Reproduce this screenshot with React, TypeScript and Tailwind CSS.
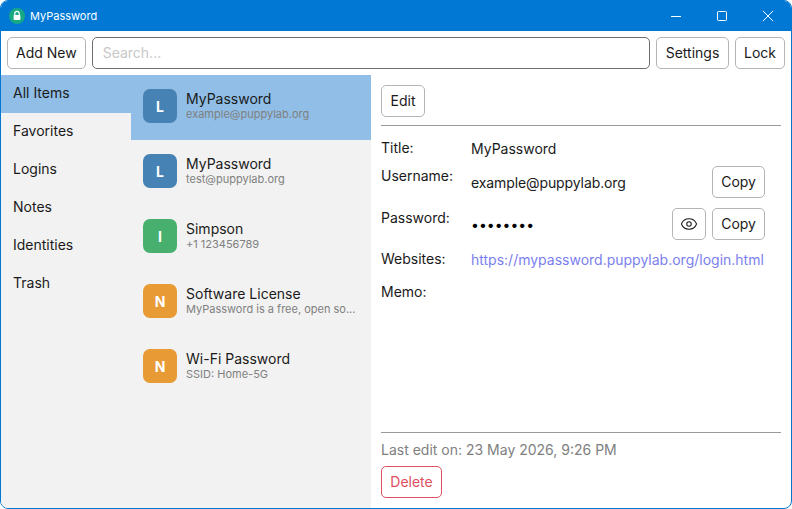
import { Eye } from "lucide-react";

const folders = ["All Items", "Favorites", "Logins", "Notes", "Identities", "Trash"];

const items = [
  { letter: "L", color: "bg-[#4682b4]", title: "MyPassword", sub: "example@puppylab.org" },
  { letter: "L", color: "bg-[#4682b4]", title: "MyPassword", sub: "test@puppylab.org" },
  { letter: "I", color: "bg-[#48b06e]", title: "Simpson", sub: "+1 123456789" },
  { letter: "N", color: "bg-[#e89a35]", title: "Software License", sub: "MyPassword is a free, open so..." },
  { letter: "N", color: "bg-[#e89a35]", title: "Wi-Fi Password", sub: "SSID: Home-5G" },
];

const btn = "h-8 rounded-[5px] border border-[#b4b4b4] bg-white px-2 pb-px text-[14px] text-[#1a1a1a]";
const label = "w-[90px] shrink-0 text-[14px] leading-[20px] text-[#1a1a1a]";

export default function App() {
  return (
    <div className="h-[509px] w-[792px] overflow-hidden bg-white font-['Inter',sans-serif]">
      <div className="flex h-full flex-col overflow-hidden rounded-lg border border-[#0078d4] bg-white">
        <div className="flex h-[30px] shrink-0 items-center bg-[#0078d4] pl-[8px] text-white">
          <svg width="16" height="16" viewBox="0 0 16 16">
            <circle cx="8" cy="8" r="8" fill="#17a884" />
            <path d="M5.8 7.2V5.6a2.2 2.2 0 0 1 4.4 0v1.6" fill="none" stroke="#fff" strokeWidth="1.2" />
            <rect x="4.6" y="7" width="6.8" height="5" rx="0.8" fill="#fff" />
          </svg>
          <span className="ml-[5px] text-[11px]">MyPassword</span>
          <div className="ml-auto flex h-full items-center">
            <div className="flex w-[46px] justify-center">
              <svg width="12" height="12" viewBox="0 0 12 12"><path d="M1 6.5h10" stroke="#fff" /></svg>
            </div>
            <div className="flex w-[46px] justify-center">
              <svg width="12" height="12" viewBox="0 0 12 12"><rect x="1.5" y="1.5" width="9" height="9" rx="0.8" fill="none" stroke="#fff" /></svg>
            </div>
            <div className="flex w-[46px] justify-center">
              <svg width="12" height="12" viewBox="0 0 12 12"><path d="M1 1l10 10M11 1L1 11" stroke="#fff" /></svg>
            </div>
          </div>
        </div>

        <div className="flex h-[44px] shrink-0 items-center gap-[6px] px-[6px]">
          <button className={btn}>Add New</button>
          <input
            placeholder="Search..."
            className="h-8 min-w-0 flex-1 rounded-[5px] border border-[#6e6e6e] px-[10px] pb-px text-[14px] outline-none placeholder:text-[#c8c8c8]"
          />
          <button className={`${btn} w-[73px]`}>Settings</button>
          <button className={btn}>Lock</button>
        </div>

        <div className="flex min-h-0 flex-1">
          <div className="w-[130px] shrink-0 bg-[#f2f2f2]">
            {folders.map((f, i) => (
              <div
                key={f}
                className={`flex h-[38px] items-center pb-[4px] pl-3 text-[14px] text-[#1a1a1a] ${i === 0 ? "bg-[#90bee6]" : ""}`}
              >
                {f}
              </div>
            ))}
          </div>

          <div className="w-[240px] shrink-0 bg-[#f2f2f2]">
            {items.map((it, i) => (
              <div
                key={it.sub}
                className={`flex h-[65px] items-center gap-[9px] pl-3 pr-4 ${i === 0 ? "bg-[#90bee6]" : ""}`}
              >
                <div className={`mb-[3px] flex h-[34px] w-[34px] shrink-0 items-center justify-center rounded-[7px] text-[14px] font-bold text-white ${it.color}`}>
                  {it.letter}
                </div>
                <div className="min-w-0 flex-1 pb-[4px]">
                  <div className="whitespace-nowrap text-[14px] leading-[17px] text-[#1a1a1a]">{it.title}</div>
                  <div className="whitespace-nowrap text-[11px] leading-[14px] text-[#808080]">{it.sub}</div>
                </div>
              </div>
            ))}
          </div>

          <div className="flex min-w-0 flex-1 flex-col px-[10px] pt-[10px]">
            <div className="border-b border-[#9a9a9a] pb-[8px]">
              <button className={`${btn} w-[44px] px-0`}>Edit</button>
            </div>
            <div className="mt-[12px] flex h-[20px] items-center">
              <div className={label}>Title:</div>
              <div className="text-[14px] text-[#1a1a1a]">MyPassword</div>
            </div>
            <div className="mt-[8px] flex h-[32px]">
              <div className={label}>Username:</div>
              <div className="flex-1 pt-[7px] text-[14px] leading-[20px] tracking-[-0.1px] text-[#1a1a1a]">example@puppylab.org</div>
              <button className={`${btn} mr-[16px]`}>Copy</button>
            </div>
            <div className="mt-[10px] flex h-[32px]">
              <div className={label}>Password:</div>
              <div className="flex-1 pt-[7px] text-[14px] leading-[20px] text-black">••••••••</div>
              <button className="mr-[6px] flex h-8 w-[34px] items-center justify-center rounded-[5px] border border-[#b4b4b4]">
                <Eye size={18} strokeWidth={1.4} className="text-[#1a1a1a]" />
              </button>
              <button className={`${btn} mr-[16px]`}>Copy</button>
            </div>
            <div className="mt-[9px] flex h-[20px] items-center">
              <div className={label}>Websites:</div>
              <div className="whitespace-nowrap text-[14px] text-[#7b80ee]">https://mypassword.puppylab.org/login.html</div>
            </div>
            <div className="mt-[13px] flex h-[20px] items-center">
              <div className={label}>Memo:</div>
            </div>
            <div className="mt-auto border-t border-[#9a9a9a] pb-[10px] pt-[7px]">
              <div className="text-[14px] leading-[20px] text-[#808080]">Last edit on: 23 May 2026, 9:26 PM</div>
              <button className="mt-[6px] h-8 w-[61px] rounded-[5px] border border-[#e0505f] pb-px text-[14px] text-[#e0505f]">Delete</button>
            </div>
          </div>
        </div>
      </div>
    </div>
  );
}
